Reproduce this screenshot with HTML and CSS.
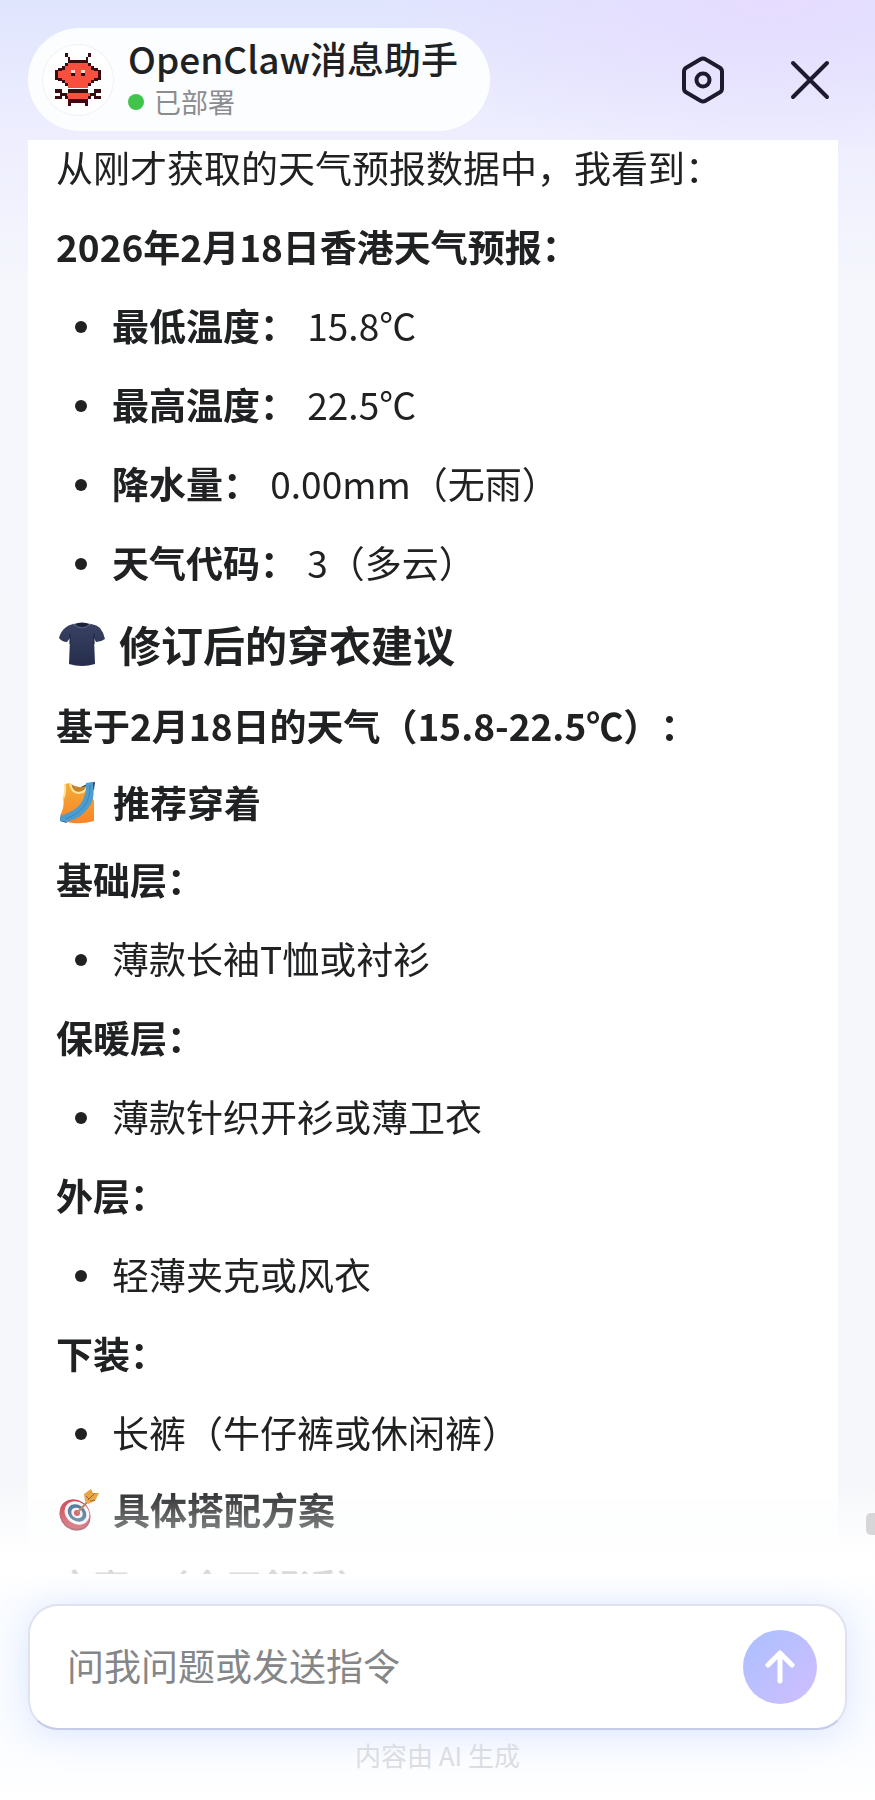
FILE: index.html
```html
<!DOCTYPE html>
<html lang="zh-CN">
<head>
    <meta charset="UTF-8">
    <meta name="viewport" content="width=device-width, initial-scale=1">
    <title>OpenClaw消息助手</title>
    <link rel="stylesheet" href="styles.css">
</head>
<body>

<div class="app">
    <header class="header">
        <div class="profile">
            <div class="avatar">
                <svg class="avatar-icon" viewBox="0 0 28 32" shape-rendering="crispEdges" aria-hidden="true">
                    <path fill="#f94f3e" d="M8 6h12v2h2v2h2v1h2v4h-2v2h-2v2h-2v2H8v-2H6v-2H4v-2H2v-4h2v-1h2V8h2zM7 24h14v4H7z"/>
                    <g fill="#3a0b10">
                        <path d="M6 0h2v2H6zM20 0h2v2h-2zM8 2h1v2H8zM19 2h1v2h-1zM8 4h12v2H8z"/>
                        <path d="M6 6h2v2H6zM20 6h2v2h-2zM4 8h2v2H4zM22 8h2v2h-2zM2 9h2v2H2zM24 9h2v2h-2zM0 10h2v6H0zM26 10h2v6h-2z"/>
                        <path d="M2 15h2v2H2zM24 15h2v2h-2zM4 16h2v2H4zM22 16h2v2h-2zM6 18h2v2H6zM20 18h2v2h-2z"/>
                        <path d="M8 22h12v2H8zM0 22h4v2H0zM24 22h4v2h-4zM3 24h4v2H3zM21 24h4v2h-4zM0 26h4v2H0zM24 26h4v2h-4zM6 26h2v2H6zM20 26h2v2h-2zM8 28h12v2H8zM8 30h2v2H8zM18 30h2v2h-2z"/>
                    </g>
                    <path fill="#2b0a10" d="M10 12h2v2h-2zM16 12h2v2h-2z"/>
                    <path fill="#ffd9cf" d="M10 10h2v2h-2zM16 10h2v2h-2z"/>
                </svg>
            </div>
            <div class="profile-text">
                <h1 class="profile-name">OpenClaw消息助手</h1>
                <p class="profile-status"><span class="status-dot"></span>已部署</p>
            </div>
        </div>
        <div class="header-actions">
            <button class="icon-button" type="button" aria-label="设置">
                <svg width="46" height="50" viewBox="0 0 46 50" fill="none" stroke="#1d1a2e" stroke-width="4" stroke-linejoin="round" aria-hidden="true">
                    <path d="M20.500 4.200q2.500-1.400 5 0L39.500 12.400q2.500 1.400 2.500 4.200V33.400q0 2.800-2.500 4.200L25.500 45.800q-2.500 1.400-5 0L6.500 37.600q-2.500-1.400-2.500-4.200V16.600q0-2.800 2.500-4.200z"/>
                    <circle cx="23" cy="25" r="6.500"/>
                </svg>
            </button>
            <button class="icon-button" type="button" aria-label="关闭">
                <svg width="40" height="40" viewBox="0 0 40 40" fill="none" stroke="#1d1a2e" stroke-width="4" stroke-linecap="round" aria-hidden="true">
                    <path d="M3 3l34 34M37 3L3 37"/>
                </svg>
            </button>
        </div>
    </header>

    <main class="chat">
        <article class="message">
            <p>从刚才获取的天气预报数据中，我看到：</p>
            <p><strong>2026年2月18日香港天气预报：</strong></p>
            <ul class="list">
                <li><span><strong>最低温度：</strong> 15.8℃</span></li>
                <li><span><strong>最高温度：</strong> 22.5℃</span></li>
                <li><span><strong>降水量：</strong> 0.00mm（无雨）</span></li>
                <li><span><strong>天气代码：</strong> 3（多云）</span></li>
            </ul>
            <h2 class="title">
                <svg class="title-icon" viewBox="0 0 48 48" aria-hidden="true">
                    <defs>
                        <linearGradient id="shirt" x1="0" y1="0" x2="0" y2="1">
                            <stop offset="0" stop-color="#3a4263"/>
                            <stop offset="1" stop-color="#252c4c"/>
                        </linearGradient>
                    </defs>
                    <path fill="url(#shirt)" d="M15 4Q24 8 33 4Q39 5 42 8Q46 13 47 19Q43 22 38 22L36 18L37 44Q24 48 11 44L12 18L9 22Q4 22 1 18Q3 11 7 8Q10 5 15 4z"/>
                    <path fill="#1b213d" d="M16 4Q24 1 32 4Q24 10 16 4z"/>
                    <path fill="none" stroke="#59617f" d="M15 4Q24 12 33 4"/>
                    <path fill="none" stroke="#1d2442" d="M12 14v10M36 14v10"/>
                </svg>
                修订后的穿衣建议
            </h2>
            <p><strong>基于2月18日的天气（15.8-22.5℃）：</strong></p>
            <h3 class="subtitle">
                <svg class="subtitle-icon" viewBox="0 0 42 42" aria-hidden="true">
                    <defs>
                        <linearGradient id="vest" x1="0" y1="0" x2="0" y2="1">
                            <stop offset="0" stop-color="#f2ac35"/>
                            <stop offset="1" stop-color="#fb8427"/>
                        </linearGradient>
                    </defs>
                    <path fill="#26374a" d="M23 5L31 1L37 0L36 8L29 9zM3 31L2 39L9 41z"/>
                    <path fill="url(#vest)" d="M7 2L12 1Q13 9 20 10Q27 10 28 4L34 2Q33 13 36 19V39Q22 43 9 40Q3 38 3 32Q7 23 5 16Q8 10 7 2z"/>
                    <path fill="#c5832c" d="M13 2Q20 7 28 4Q27 10 20 10Q14 9 13 2z"/>
                    <path fill="none" stroke="#ffe09a" stroke-width="2" d="M12 1Q13 10 20 11Q28 11 29 4M7 2Q8 11 5 17"/>
                    <path fill="#4e9dce" d="M28 1L35 0Q37 14 33 22Q25 36 9 40L2 39Q2 34 7 32Q29 25 28 1z"/>
                    <path fill="none" stroke="#3a85bd" d="M32 3Q33 28 7 37"/>
                </svg>
                推荐穿着
            </h3>
            <p><strong>基础层：</strong></p>
            <ul class="list">
                <li><span>薄款长袖T恤或衬衫</span></li>
            </ul>
            <p><strong>保暖层：</strong></p>
            <ul class="list">
                <li><span>薄款针织开衫或薄卫衣</span></li>
            </ul>
            <p><strong>外层：</strong></p>
            <ul class="list">
                <li><span>轻薄夹克或风衣</span></li>
            </ul>
            <p><strong>下装：</strong></p>
            <ul class="list">
                <li><span>长裤（牛仔裤或休闲裤）</span></li>
            </ul>
            <h3 class="subtitle">
                <svg class="subtitle-icon" viewBox="0 0 42 42" aria-hidden="true">
                    <ellipse cx="17" cy="27" rx="16" ry="14" transform="rotate(35 17 27)" fill="#8e1d2c"/>
                    <ellipse cx="17" cy="25" rx="16" ry="14" transform="rotate(35 17 25)" fill="#c52f3d"/>
                    <ellipse cx="19" cy="24" rx="13" ry="11" transform="rotate(35 19 24)" fill="#f5f5f7"/>
                    <ellipse cx="19" cy="24" rx="10" ry="8" transform="rotate(35 19 24)" fill="#2b5a86"/>
                    <ellipse cx="19" cy="24" rx="6" ry="5" transform="rotate(35 19 24)" fill="#f1f1f4"/>
                    <circle cx="19" cy="24" r="3" fill="#c92f37"/>
                    <path stroke="#b0653c" stroke-width="2" d="M19 24L32 10"/>
                    <path fill="#e89a2c" d="M27 12L26 5L33 0L35 4L41 4L37 12L30 15z"/>
                    <path stroke="#8f5015" fill="none" d="M30 11L37 4M28 7l3 3M32 12l5-1"/>
                </svg>
                具体搭配方案
            </h3>
            <p><strong>方案1（全天舒适）</strong></p>
        </article>
        <div class="scroll-thumb"></div>
    </main>

    <footer class="footer">
        <form class="composer">
            <input class="composer-input" type="text" placeholder="问我问题或发送指令" aria-label="问我问题或发送指令">
            <button class="send-button" type="button" aria-label="发送">
                <svg width="30" height="34" viewBox="0 0 30 34" fill="none" stroke="#fff" stroke-width="5" stroke-linecap="round" stroke-linejoin="round" aria-hidden="true">
                    <path d="M15 31V4M3 15L15 3L27 15"/>
                </svg>
            </button>
        </form>
        <p class="notice">内容由 AI 生成</p>
    </footer>
</div>

</body>
</html>
```
FILE: styles.css
```css
* {
    box-sizing: border-box;
}

body {
    margin: 0;
    font-family: "Noto Sans CJK SC", "Noto Sans", sans-serif;
    font-size: 37px;
    line-height: 55px;
    color: #202122;
    text-spacing-trim: space-all;
}

h1, h2, h3, p, ul {
    margin: 0;
    padding: 0;
}

button {
    border: 0;
    padding: 0;
    background: none;
    cursor: pointer;
}

svg {
    display: block;
}

.app {
    display: flex;
    flex-direction: column;
    height: 100vh;
    background:
        radial-gradient(ellipse 45% 160px at 88% 0, #e6dcff, rgba(230, 220, 255, 0)),
        linear-gradient(to bottom, #e0e5fe 0, #eeeefe 140px, #f5f7fc 290px, #f5f7fa 1480px, #fff 1560px);
}

.header {
    display: flex;
    align-items: center;
    justify-content: space-between;
    padding: 28px 45px 9px 28px;
}

.profile {
    display: flex;
    align-items: center;
    gap: 14px;
    height: 103px;
    padding: 0 32px 0 14px;
    border-radius: 52px;
    background: #fcfdff;
}

.profile-text {
    padding-bottom: 6px;
}

.avatar {
    display: flex;
    align-items: center;
    justify-content: center;
    width: 72px;
    height: 72px;
    border: 1px solid #f1f1f3;
    border-radius: 50%;
    background: #fff;
}

.avatar-icon {
    width: 46px;
    height: 53px;
}

.profile-name {
    font-size: 37px;
    font-weight: 500;
    line-height: 50px;
}

.profile-status {
    display: flex;
    align-items: center;
    gap: 10px;
    font-size: 27px;
    line-height: 38px;
    color: #8b8c8f;
}

.status-dot {
    width: 16px;
    height: 16px;
    border-radius: 50%;
    background: #42c34c;
}

.header-actions {
    display: flex;
    align-items: center;
    gap: 64px;
}

.chat {
    position: relative;
    flex: 1;
    min-height: 0;
    overflow: hidden;
}

.message {
    display: flex;
    flex-direction: column;
    gap: 24px;
    height: 100%;
    margin: 0 37px 0 28px;
    padding: 0 28px;
    background: #fff;
    -webkit-mask-image: linear-gradient(to top, rgba(0, 0, 0, 0.15), #000 90px);
    mask-image: linear-gradient(to top, rgba(0, 0, 0, 0.15), #000 90px);
}

.message > * {
    flex-shrink: 0;
}

.list {
    display: flex;
    flex-direction: column;
    gap: 24px;
    list-style: none;
}

.list li {
    display: flex;
    padding-left: 19px;
}

.list li::before {
    content: "";
    flex-shrink: 0;
    width: 12px;
    height: 12px;
    margin: 23px 25px 0 0;
    border-radius: 50%;
    background: #202122;
}

.list strong {
    margin-right: 2px;
}

.title,
.subtitle {
    display: flex;
    align-items: center;
    gap: 13px;
    padding-left: 2px;
    font-weight: 700;
}

.title {
    font-size: 42px;
    line-height: 60px;
}

.subtitle {
    font-size: 37px;
    line-height: 51px;
}

.title-icon {
    width: 48px;
    height: 48px;
}

.subtitle-icon {
    width: 42px;
    height: 42px;
}

.scroll-thumb {
    position: absolute;
    right: 0;
    bottom: 39px;
    width: 9px;
    height: 22px;
    border-radius: 5px 0 0 5px;
    background: #d6d6d8;
}

.footer {
    padding: 30px 28px 27px;
    background: linear-gradient(to bottom, #fff, #fafcff 30px, #fafcff 160px, #fff);
}

.composer {
    display: flex;
    align-items: center;
    height: 126px;
    padding: 0 28px 0 37px;
    border: 2px solid #e0e2ee;
    border-bottom-color: #c5cbe8;
    border-radius: 30px;
    background: #fff;
    box-shadow: 0 4px 36px rgba(120, 160, 255, 0.24);
}

.composer-input {
    flex: 1;
    min-width: 0;
    height: 55px;
    padding: 0 0 4px;
    border: 0;
    outline: 0;
    background: none;
    font: inherit;
}

.composer-input::placeholder {
    color: #858688;
    opacity: 1;
}

.send-button {
    display: flex;
    align-items: center;
    justify-content: center;
    width: 74px;
    height: 74px;
    border-radius: 50%;
    background: linear-gradient(135deg, #abc0ff, #d0beff);
}

.notice {
    padding-top: 7px;
    font-size: 26px;
    line-height: 36px;
    text-align: center;
    color: #dcdde3;
}
```
